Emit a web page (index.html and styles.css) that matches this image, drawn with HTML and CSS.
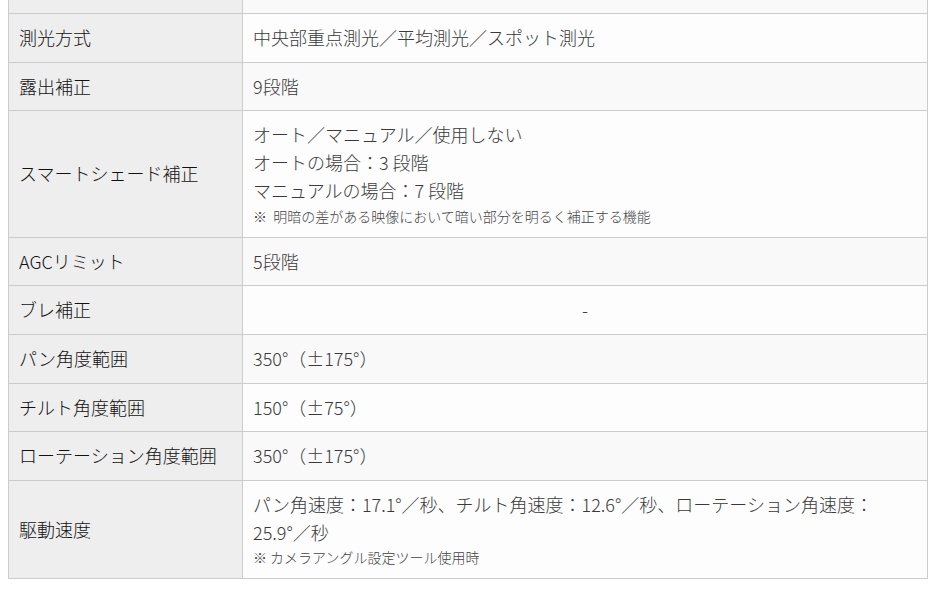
FILE: index.html
```html
<!DOCTYPE html>
<html lang="ja">
<head>
<meta charset="utf-8">
<link rel="stylesheet" href="styles.css">
</head>
<body>
<table class="spec">
  <tr class="cut"><th></th><td></td></tr>
  <tr><th>測光方式</th><td>中央部重点測光／平均測光／スポット測光</td></tr>
  <tr><th>露出補正</th><td>9段階</td></tr>
  <tr><th>スマートシェード補正</th><td>オート／マニュアル／使用しない<br>オートの場合：3 段階<br>マニュアルの場合：7 段階<span class="note">※&nbsp; 明暗の差がある映像において暗い部分を明るく補正する機能</span></td></tr>
  <tr><th>AGCリミット</th><td>5段階</td></tr>
  <tr><th>ブレ補正</th><td class="center">-</td></tr>
  <tr><th>パン角度範囲</th><td>350°（±175°）</td></tr>
  <tr><th>チルト角度範囲</th><td>150°（±75°）</td></tr>
  <tr><th>ローテーション角度範囲</th><td>350°（±175°）</td></tr>
  <tr><th>駆動速度</th><td>パン角速度：17.1°／秒、チルト角速度：12.6°／秒、ローテーション角速度：<br>25.9°／秒<span class="note">※ カメラアングル設定ツール使用時</span></td></tr>
</table>
</body>
</html>
```
FILE: styles.css
```css
html, body {
  background: #fff;
}
body {
  margin: 0 8px;
  font-family: "Noto Sans CJK JP", "Noto Sans", sans-serif;
}
.spec {
  border-collapse: collapse;
  width: 920px;
  margin-top: -36px;
  font-size: 18px;
  line-height: 27.7px;
}
.spec th, .spec td {
  border: 1px solid #cccccc;
  padding: 10px 10px;
  text-align: left;
  vertical-align: middle;
  font-weight: 300;
}
.spec th {
  width: 213px;
  background: #eeeeee;
  color: #111;
}
.spec td {
  color: #3a3a3a;
}
.spec tr:nth-child(odd) td {
  background: #f9f9f9;
}
.spec tr:nth-child(even) td {
  background: #fdfdfd;
}
.spec tr.cut th, .spec tr.cut td {
  height: 28px;
}
.spec td.center {
  text-align: center;
}
.note {
  display: block;
  font-size: 14px;
  line-height: 22px;
  color: #444;
}
```
